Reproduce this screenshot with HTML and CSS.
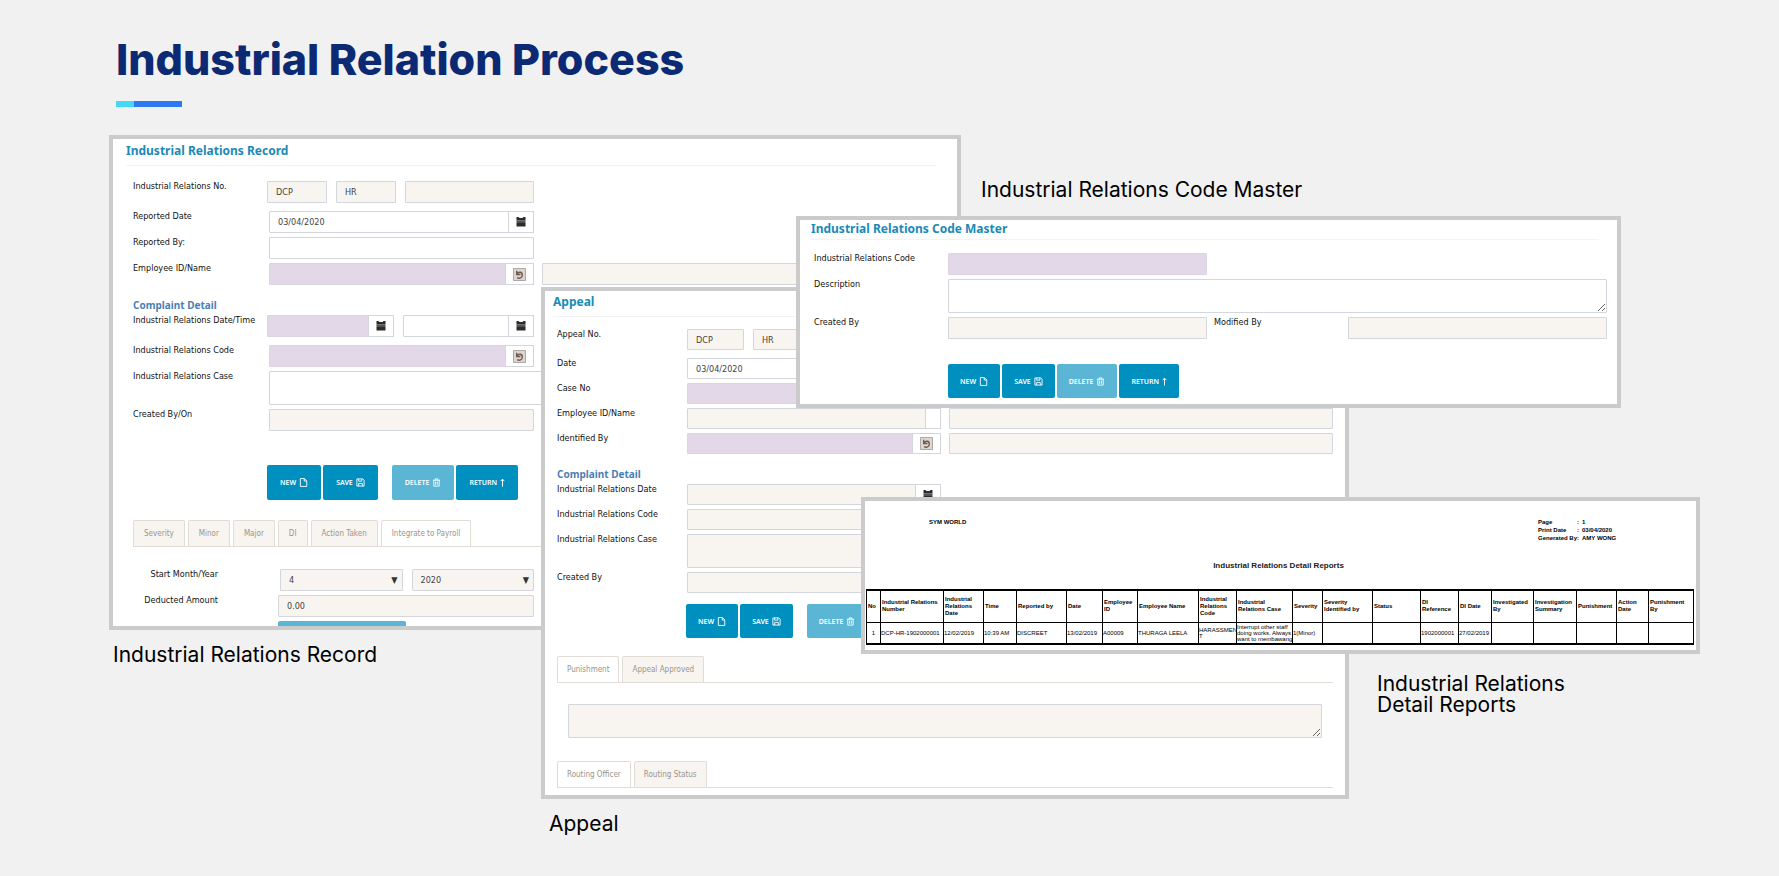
FILE: index.html
```
<!DOCTYPE html>
<html lang="en">
<head>
    <meta charset="utf-8">
    <title>Industrial Relation Process</title>
    <link rel="stylesheet" href="styles.css">
</head>
<body>
    <!-- shared icons -->
    <svg class="sprite" aria-hidden="true">
        <symbol id="i-calendar" viewBox="0 0 10 10">
            <path d="M.5 0h2l1 1h3l1-1h2v3.500h-9z" fill="#2b2b2b"/>
            <path d="M.5 3.500h9v2.500h-9z" fill="#55534f"/>
            <path d="M.5 6h9v3.500h-9z" fill="#2b2b2b"/>
        </symbol>
        <symbol id="i-lookup" viewBox="0 0 14 14">
            <path d="M.5.5h13v13H.5z" fill="#ddd5cf" stroke="#a9a19b"/>
            <path d="M4 3v4h4M4.5 6.5C6 3.500 10 4 10 7.500S7 11.500 4.500 10.500" fill="none" stroke="#6f5a50" stroke-width="1.500"/>
        </symbol>
        <symbol id="i-file" viewBox="0 0 10 10">
            <path d="M1.500.6h4.500L8.600 3.200v6.200H1.500zM5.800.6v2.800h2.800" fill="none" stroke="#fff"/>
        </symbol>
        <symbol id="i-save" viewBox="0 0 10 10">
            <path d="M1 1h6.500L9 2.500V9H1zM3 1v2.500h3.500V1M3 9V6h4v3" fill="none" stroke="#fff"/>
        </symbol>
        <symbol id="i-trash" viewBox="0 0 10 10">
            <path d="M1 2.500h8M3.500 2.500V1h3v1.500M2 2.500V9h6V2.500M4 4v3.500M6 4v3.500" fill="none" stroke="#fff"/>
        </symbol>
        <symbol id="i-up" viewBox="0 0 6 10">
            <path d="M3 10V1M.8 3.400L3 1l2.200 2.400" fill="none" stroke="#fff" stroke-width="1.200"/>
        </symbol>
    </svg>

    <header class="page-header">
        <h1>Industrial Relation Process</h1>
        <div class="accent"></div>
    </header>

    <main class="canvas">
        <!-- Industrial Relations Record -->
        <section class="window window-record">
            <h2>Industrial Relations Record</h2>
            <form class="form">
                <div class="row roomy">
                    <label for="irNo">Industrial Relations No.</label>
                    <div class="field parts outset">
                        <input class="code readonly" id="irNo" type="text" value="DCP" readonly>
                        <input class="code readonly" type="text" value="HR" aria-label="Department" readonly>
                        <input class="readonly" type="text" aria-label="Number" readonly>
                    </div>
                </div>
                <div class="row">
                    <label for="reportedDate">Reported Date</label>
                    <div class="field group">
                        <input id="reportedDate" type="text" value="03/04/2020">
                        <button class="addon" type="button" aria-label="Pick date"><svg class="ic-cal"><use href="#i-calendar"/></svg></button>
                    </div>
                </div>
                <div class="row">
                    <label for="reportedBy">Reported By:</label>
                    <div class="field"><input id="reportedBy" type="text"></div>
                </div>
                <div class="row">
                    <label for="employeeId">Employee ID/Name</label>
                    <div class="field group">
                        <input class="required" id="employeeId" type="text">
                        <button class="addon wide" type="button" aria-label="Look up"><svg class="ic-look"><use href="#i-lookup"/></svg></button>
                    </div>
                    <div class="extra"><input class="readonly" type="text" aria-label="Employee name" readonly></div>
                </div>
                <h3>Complaint Detail</h3>
                <div class="row roomy">
                    <label for="irDate">Industrial Relations Date/Time</label>
                    <div class="field parts date-time outset">
                        <div class="group date">
                            <input class="required" id="irDate" type="text">
                            <button class="addon" type="button" aria-label="Pick date"><svg class="ic-cal"><use href="#i-calendar"/></svg></button>
                        </div>
                        <div class="group time">
                            <input type="text" aria-label="Time">
                            <button class="addon" type="button" aria-label="Pick time"><svg class="ic-cal"><use href="#i-calendar"/></svg></button>
                        </div>
                    </div>
                </div>
                <div class="row">
                    <label for="irCode">Industrial Relations Code</label>
                    <div class="field group">
                        <input class="required" id="irCode" type="text">
                        <button class="addon wide" type="button" aria-label="Look up"><svg class="ic-look"><use href="#i-lookup"/></svg></button>
                    </div>
                </div>
                <div class="row">
                    <label for="irCase">Industrial Relations Case</label>
                    <div class="extra flush"><textarea id="irCase"></textarea></div>
                </div>
                <div class="row">
                    <label for="createdOn">Created By/On</label>
                    <div class="field"><input class="readonly" id="createdOn" type="text" readonly></div>
                </div>
                <div class="actions split">
                    <button class="btn" type="button">NEW <svg class="ic-btn"><use href="#i-file"/></svg></button>
                    <button class="btn" type="button">SAVE <svg class="ic-btn"><use href="#i-save"/></svg></button>
                    <button class="btn" type="button" disabled>DELETE <svg class="ic-btn"><use href="#i-trash"/></svg></button>
                    <button class="btn" type="button">RETURN <svg class="ic-up"><use href="#i-up"/></svg></button>
                </div>
            </form>
            <nav class="tabs">
                <button type="button">Severity</button>
                <button type="button">Minor</button>
                <button type="button">Major</button>
                <button type="button">DI</button>
                <button type="button">Action Taken</button>
                <button type="button" class="active">Integrate to Payroll</button>
            </nav>
            <form class="payroll">
                <div class="row roomy">
                    <label for="startMonth">Start Month/Year</label>
                    <div class="field parts">
                        <div class="select"><select id="startMonth"><option>4</option></select></div>
                        <div class="select"><select aria-label="Year"><option>2020</option></select></div>
                    </div>
                </div>
                <div class="row">
                    <label for="deducted">Deducted Amount</label>
                    <div class="field"><input class="readonly" id="deducted" type="text" value="0.00" readonly></div>
                </div>
                <div class="cut-button"></div>
            </form>
        </section>
        <p class="caption caption-record">Industrial Relations Record</p>

        <!-- Appeal -->
        <section class="window window-appeal">
            <h2>Appeal</h2>
            <form class="form">
                <div class="row roomy">
                    <label for="appealNo">Appeal No.</label>
                    <div class="field parts">
                        <input class="code readonly" id="appealNo" type="text" value="DCP" readonly>
                        <input class="code readonly" type="text" value="HR" aria-label="Department" readonly>
                        <input class="readonly" type="text" aria-label="Number" readonly>
                    </div>
                </div>
                <div class="row">
                    <label for="appealDate">Date</label>
                    <div class="field group">
                        <input id="appealDate" type="text" value="03/04/2020">
                        <button class="addon" type="button" aria-label="Pick date"><svg class="ic-cal"><use href="#i-calendar"/></svg></button>
                    </div>
                </div>
                <div class="row">
                    <label for="caseNo">Case No</label>
                    <div class="field group">
                        <input class="required" id="caseNo" type="text">
                        <button class="addon wide" type="button" aria-label="Look up"><svg class="ic-look"><use href="#i-lookup"/></svg></button>
                    </div>
                </div>
                <div class="row">
                    <label for="appealEmployee">Employee ID/Name</label>
                    <div class="field group">
                        <input class="readonly" id="appealEmployee" type="text" readonly>
                        <button class="addon narrow" type="button" aria-label="Clear"></button>
                    </div>
                    <div class="extra"><input class="readonly" type="text" aria-label="Employee name" readonly></div>
                </div>
                <div class="row">
                    <label for="identifiedBy">Identified By</label>
                    <div class="field group">
                        <input class="required" id="identifiedBy" type="text">
                        <button class="addon wide" type="button" aria-label="Look up"><svg class="ic-look"><use href="#i-lookup"/></svg></button>
                    </div>
                    <div class="extra"><input class="readonly" type="text" aria-label="Identified by name" readonly></div>
                </div>
                <h3>Complaint Detail</h3>
                <div class="row">
                    <label for="appealIrDate">Industrial Relations Date</label>
                    <div class="field group">
                        <input class="readonly" id="appealIrDate" type="text" readonly>
                        <button class="addon" type="button" aria-label="Pick date"><svg class="ic-cal"><use href="#i-calendar"/></svg></button>
                    </div>
                </div>
                <div class="row">
                    <label for="appealIrCode">Industrial Relations Code</label>
                    <div class="field"><input class="readonly" id="appealIrCode" type="text" readonly></div>
                </div>
                <div class="row">
                    <label for="appealIrCase">Industrial Relations Case</label>
                    <div class="extra flush"><textarea class="readonly" id="appealIrCase" readonly></textarea></div>
                </div>
                <div class="row">
                    <label for="appealCreated">Created By</label>
                    <div class="field"><input class="readonly" id="appealCreated" type="text" readonly></div>
                </div>
                <div class="actions split">
                    <button class="btn" type="button">NEW <svg class="ic-btn"><use href="#i-file"/></svg></button>
                    <button class="btn" type="button">SAVE <svg class="ic-btn"><use href="#i-save"/></svg></button>
                    <button class="btn" type="button" disabled>DELETE <svg class="ic-btn"><use href="#i-trash"/></svg></button>
                </div>
            </form>
            <nav class="tabs">
                <button type="button" class="active">Punishment</button>
                <button type="button">Appeal Approved</button>
            </nav>
            <div class="punishment">
                <textarea class="readonly resizable" aria-label="Punishment"></textarea>
            </div>
            <nav class="tabs">
                <button type="button" class="active">Routing Officer</button>
                <button type="button">Routing Status</button>
            </nav>
        </section>
        <p class="caption caption-appeal">Appeal</p>

        <!-- Code Master -->
        <p class="caption caption-master">Industrial Relations Code Master</p>
        <section class="window window-master">
            <h2>Industrial Relations Code Master</h2>
            <form class="form">
                <div class="row">
                    <label for="masterCode">Industrial Relations Code</label>
                    <div class="field"><input class="required" id="masterCode" type="text"></div>
                </div>
                <div class="row">
                    <label for="description">Description</label>
                    <div class="extra flush"><textarea class="resizable" id="description"></textarea></div>
                </div>
                <div class="row">
                    <label for="masterCreated">Created By</label>
                    <div class="field"><input class="readonly" id="masterCreated" type="text" readonly></div>
                    <label class="second" for="masterModified">Modified By</label>
                    <div class="field"><input class="readonly" id="masterModified" type="text" readonly></div>
                </div>
                <div class="actions">
                    <button class="btn" type="button">NEW <svg class="ic-btn"><use href="#i-file"/></svg></button>
                    <button class="btn" type="button">SAVE <svg class="ic-btn"><use href="#i-save"/></svg></button>
                    <button class="btn" type="button" disabled>DELETE <svg class="ic-btn"><use href="#i-trash"/></svg></button>
                    <button class="btn" type="button">RETURN <svg class="ic-up"><use href="#i-up"/></svg></button>
                </div>
            </form>
        </section>

        <!-- Detail Reports -->
        <section class="window window-report">
            <div class="report-head">
                <div class="company">SYM WORLD</div>
                <dl class="report-meta">
                    <dt>Page</dt><dd>:</dd><dd>1</dd>
                    <dt>Print Date</dt><dd>:</dd><dd>03/04/2020</dd>
                    <dt>Generated By</dt><dd>:</dd><dd>AMY WONG</dd>
                </dl>
            </div>
            <div class="report-title">Industrial Relations Detail Reports</div>
            <table class="report">
                <colgroup>
                    <col class="w14"><col class="w63"><col class="w40"><col class="w33"><col class="w50">
                    <col class="w36"><col class="w35"><col class="w61"><col class="w38"><col class="w56">
                    <col class="w30"><col class="w50"><col class="w48"><col class="w38"><col class="w33">
                    <col class="w42"><col class="w43"><col class="w40"><col class="w32"><col class="w45">
                </colgroup>
                <thead>
                    <tr>
                        <th>No</th>
                        <th>Industrial Relations<br>Number</th>
                        <th>Industrial<br>Relations<br>Date</th>
                        <th>Time</th>
                        <th>Reported by</th>
                        <th>Date</th>
                        <th>Employee<br>ID</th>
                        <th>Employee Name</th>
                        <th>Industrial<br>Relations<br>Code</th>
                        <th>Industrial<br>Relations Case</th>
                        <th>Severity</th>
                        <th>Severity<br>Identified by</th>
                        <th>Status</th>
                        <th>DI<br>Reference</th>
                        <th>DI Date</th>
                        <th>Investigated<br>By</th>
                        <th>Investigation<br>Summary</th>
                        <th>Punishment</th>
                        <th>Action<br>Date</th>
                        <th>Punishment<br>By</th>
                    </tr>
                </thead>
                <tbody>
                    <tr>
                        <td class="num">1</td>
                        <td>DCP-HR-1902000001</td>
                        <td>12/02/2019</td>
                        <td>10:39 AM</td>
                        <td>DISCREET</td>
                        <td>13/02/2019</td>
                        <td>A00009</td>
                        <td>THURAGA LEELA</td>
                        <td>HARASSMEN<br>T</td>
                        <td>Interrupt other staff<br>doing works. Always<br>want to membawang</td>
                        <td>1(Minor)</td>
                        <td></td>
                        <td></td>
                        <td>1902000001</td>
                        <td>27/02/2019</td>
                        <td></td>
                        <td></td>
                        <td></td>
                        <td></td>
                        <td></td>
                    </tr>
                </tbody>
            </table>
        </section>
        <p class="caption caption-report">Industrial Relations<br>Detail Reports</p>
    </main>
</body>
</html>
```
FILE: styles.css
```
* {
    box-sizing: border-box;
}

body {
    margin: 0;
    min-height: 100vh;
    position: relative;
    overflow: hidden;
    background: #f1f1f1;
    font-family: "DejaVu Sans Condensed", "DejaVu Sans", sans-serif;
    font-size: 9px;
    color: #222;
}

.sprite {
    display: none;
}

/* page title */
.page-header {
    padding: 33px 116px 0;
}

h1 {
    margin: 0;
    font: 800 43px/52px Inter, sans-serif;
    color: #0b2a73;
}

.accent {
    width: 66px;
    height: 6px;
    margin-top: 16px;
    background: linear-gradient(to right, #43d9f7 18px, #2c79f3 18px);
}

/* overlapping windows on the free canvas */
.window {
    position: absolute;
    overflow: hidden;
    background: #fff;
    border: 4px solid #cbcbcb;
}

.window-record {
    left: 109px;
    top: 135px;
    width: 852px;
    height: 495px;
    padding: 5px 20px 0;
}

.window-appeal {
    left: 541px;
    top: 287px;
    width: 808px;
    height: 512px;
    padding: 4px 12px 0;
}

.window-master {
    left: 796px;
    top: 216px;
    width: 825px;
    height: 192px;
    padding: 2px 10px 0 14px;
}

.window-report {
    left: 861px;
    top: 497px;
    width: 839px;
    height: 157px;
    padding: 17px 5px 0 1px;
    font-family: "Liberation Sans", Arial, sans-serif;
    color: #000;
}

.caption {
    position: absolute;
    margin: 0;
    font: 21px/21px Inter, sans-serif;
    color: #000;
}

.caption-record {
    left: 113px;
    top: 644px;
}

.caption-appeal {
    left: 549px;
    top: 813px;
}

.caption-master {
    left: 981px;
    top: 179px;
}

.caption-report {
    left: 1377px;
    top: 673px;
}

h2 {
    margin: 0 1px 0 -7px;
    padding-bottom: 7px;
    border-bottom: 1px solid #f3f3f3;
    font: bold 12px/14px "Noto Sans", sans-serif;
    color: #1a8ab8;
}

.window-appeal h2 {
    margin-left: -4px;
}

.window-master h2 {
    margin-right: 8px;
    margin-left: -3px;
    padding-bottom: 3px;
}

h3 {
    margin: 0;
    font: bold 10px/14px "Noto Sans", sans-serif;
    color: #4a7fb5;
}

/* form rows */
.form {
    display: flex;
    flex-direction: column;
    gap: 4px;
    padding-top: 15px;
}

.row {
    display: flex;
    align-items: flex-start;
}

.roomy {
    margin-bottom: 4px;
}

.row label {
    flex: none;
    width: 136px;
    line-height: 11px;
    color: #111;
}

.field {
    flex: none;
    width: 265px;
}

.outset {
    width: 267px;
    margin-left: -2px;
}

.extra {
    flex: 1;
    margin-left: 8px;
}

.flush {
    margin-left: 0;
}

.group {
    display: flex;
}

.parts {
    display: flex;
    gap: 9px;
}

input,
textarea,
select {
    display: block;
    width: 100%;
    min-width: 0;
    height: 22px;
    margin: 0;
    padding: 0 8px;
    border: 1px solid #d3d6dc;
    border-radius: 1px;
    background: #fff;
    font-family: inherit;
    font-size: 9px;
    color: #444;
}

textarea {
    height: 34px;
    resize: none;
}

.resizable {
    resize: both;
}

.readonly {
    background: #f8f5f1;
}

.required {
    background: #e2d8e8;
    border-color: #dcd3e4;
}

.code {
    flex: none;
    width: 60px;
}

.addon {
    display: flex;
    flex: none;
    align-items: center;
    justify-content: center;
    width: 26px;
    padding: 0;
    margin-left: -1px;
    border: 1px solid #d3d6dc;
    background: #fff;
}

.wide {
    width: 29px;
}

.narrow {
    width: 16px;
}

.ic-cal {
    width: 10px;
    height: 10px;
}

.ic-look {
    width: 13px;
    height: 13px;
}

.date {
    flex: none;
    width: 127px;
}

.time {
    flex: 1;
}

/* buttons */
.actions {
    display: flex;
    gap: 2px;
    padding-left: 136px;
}

.btn {
    display: flex;
    align-items: center;
    justify-content: center;
    gap: 3px;
    height: 34px;
    padding: 0 12px;
    border: 0;
    border-radius: 2px;
    background: #0090c0;
    font: 600 7px "Noto Sans", sans-serif;
    color: #fff;
}

.btn:disabled {
    background: #5bb6d6;
}

.split .btn:disabled {
    margin-left: 12px;
}

.ic-btn {
    width: 9px;
    height: 9px;
}

.ic-up {
    width: 5px;
    height: 9px;
}

/* tabs */
.tabs {
    display: flex;
    gap: 3px;
    border-bottom: 1px solid #e2dcd6;
}

.tabs button {
    height: 26px;
    padding: 0 10px;
    border: 1px solid #e2dcd6;
    border-bottom: 0;
    border-radius: 2px 2px 0 0;
    background: #f8f5f1;
    font-family: inherit;
    font-size: 8px;
    color: #9a948a;
}

.tabs .active {
    margin-bottom: -1px;
    background: #fff;
}

/* record */
.window-record h3 {
    margin-top: 9px;
    margin-bottom: -1px;
}

.window-record .actions {
    margin-top: 30px;
    padding-left: 134px;
}

.window-record .btn {
    height: 35px;
    padding: 0 13px;
}

.window-record .tabs {
    margin: 20px -20px 0 0;
}

.payroll {
    padding: 22px 0 0 145px;
}

.payroll .row {
    gap: 60px;
    margin-left: -136px;
}

.payroll .row label {
    width: 76px;
    text-align: right;
}

.payroll .field {
    width: 256px;
}

.payroll .parts {
    padding-left: 2px;
}

.select {
    position: relative;
    flex: 1;
}

.select::after {
    content: "▼";
    position: absolute;
    right: 5px;
    top: 6px;
    font-size: 9px;
    line-height: 10px;
    color: #333;
    pointer-events: none;
}

select {
    appearance: none;
    background: #f8f5f1;
}

.cut-button {
    width: 128px;
    height: 32px;
    margin-top: 4px;
    border-radius: 2px;
    background: #5bb6d6;
}

/* appeal */
.window-appeal .form {
    padding-top: 12px;
}

.window-appeal .row label {
    width: 130px;
}

.window-appeal .field {
    width: 254px;
}

.window-appeal input {
    height: 21px;
}

.window-appeal .code {
    width: 57px;
}

.window-appeal h3 {
    margin-top: 9px;
    margin-bottom: -1px;
}

.window-appeal .actions {
    margin-top: 7px;
    padding-left: 129px;
}

.window-appeal .tabs {
    margin-top: 18px;
}

.window-appeal .tabs button {
    padding: 0 9px;
}

.punishment {
    padding: 21px 11px 5px;
}

/* code master */
.window-master .form {
    padding-top: 13px;
}

.window-master .row label {
    width: 134px;
}

.window-master .row .second {
    padding-left: 7px;
    width: 141px;
}

.window-master .field {
    width: calc((100% - 275px) / 2);
}

.window-master .actions {
    margin-top: 21px;
    padding-left: 134px;
}

.window-master .btn {
    padding: 0 12px;
}

/* report */
.report-head {
    display: flex;
    justify-content: space-between;
    padding: 0 41px 0 63px;
    font-size: 6px;
    line-height: 8px;
    font-weight: bold;
}

.report-meta {
    display: grid;
    grid-template-columns: 39px 5px 68px;
    margin: 0;
    white-space: nowrap;
}

.report-meta dd {
    margin: 0;
}

.report-title {
    padding: 19px 0 18px;
    font-size: 8px;
    line-height: 10px;
    font-weight: bold;
    text-align: center;
    color: #222;
}

.report {
    width: 100%;
    table-layout: fixed;
    border-collapse: collapse;
    font-size: 6px;
    line-height: 7px;
    border-top: 2px solid #000;
    border-bottom: 2px solid #000;
}

.report th,
.report td {
    padding: 0 1px;
    border: 1px solid #000;
    border-width: 0 1px 1px;
    text-align: left;
    white-space: nowrap;
}

.report th {
    height: 32px;
}

.report td {
    height: 22px;
    padding: 0;
    line-height: 6px;
}

.report .num {
    text-align: center;
}

.w14 { width: 14px; }
.w30 { width: 30px; }
.w32 { width: 32px; }
.w33 { width: 33px; }
.w35 { width: 35px; }
.w36 { width: 36px; }
.w38 { width: 38px; }
.w40 { width: 40px; }
.w42 { width: 42px; }
.w43 { width: 43px; }
.w45 { width: 45px; }
.w48 { width: 48px; }
.w50 { width: 50px; }
.w56 { width: 56px; }
.w61 { width: 61px; }
.w63 { width: 63px; }
```
